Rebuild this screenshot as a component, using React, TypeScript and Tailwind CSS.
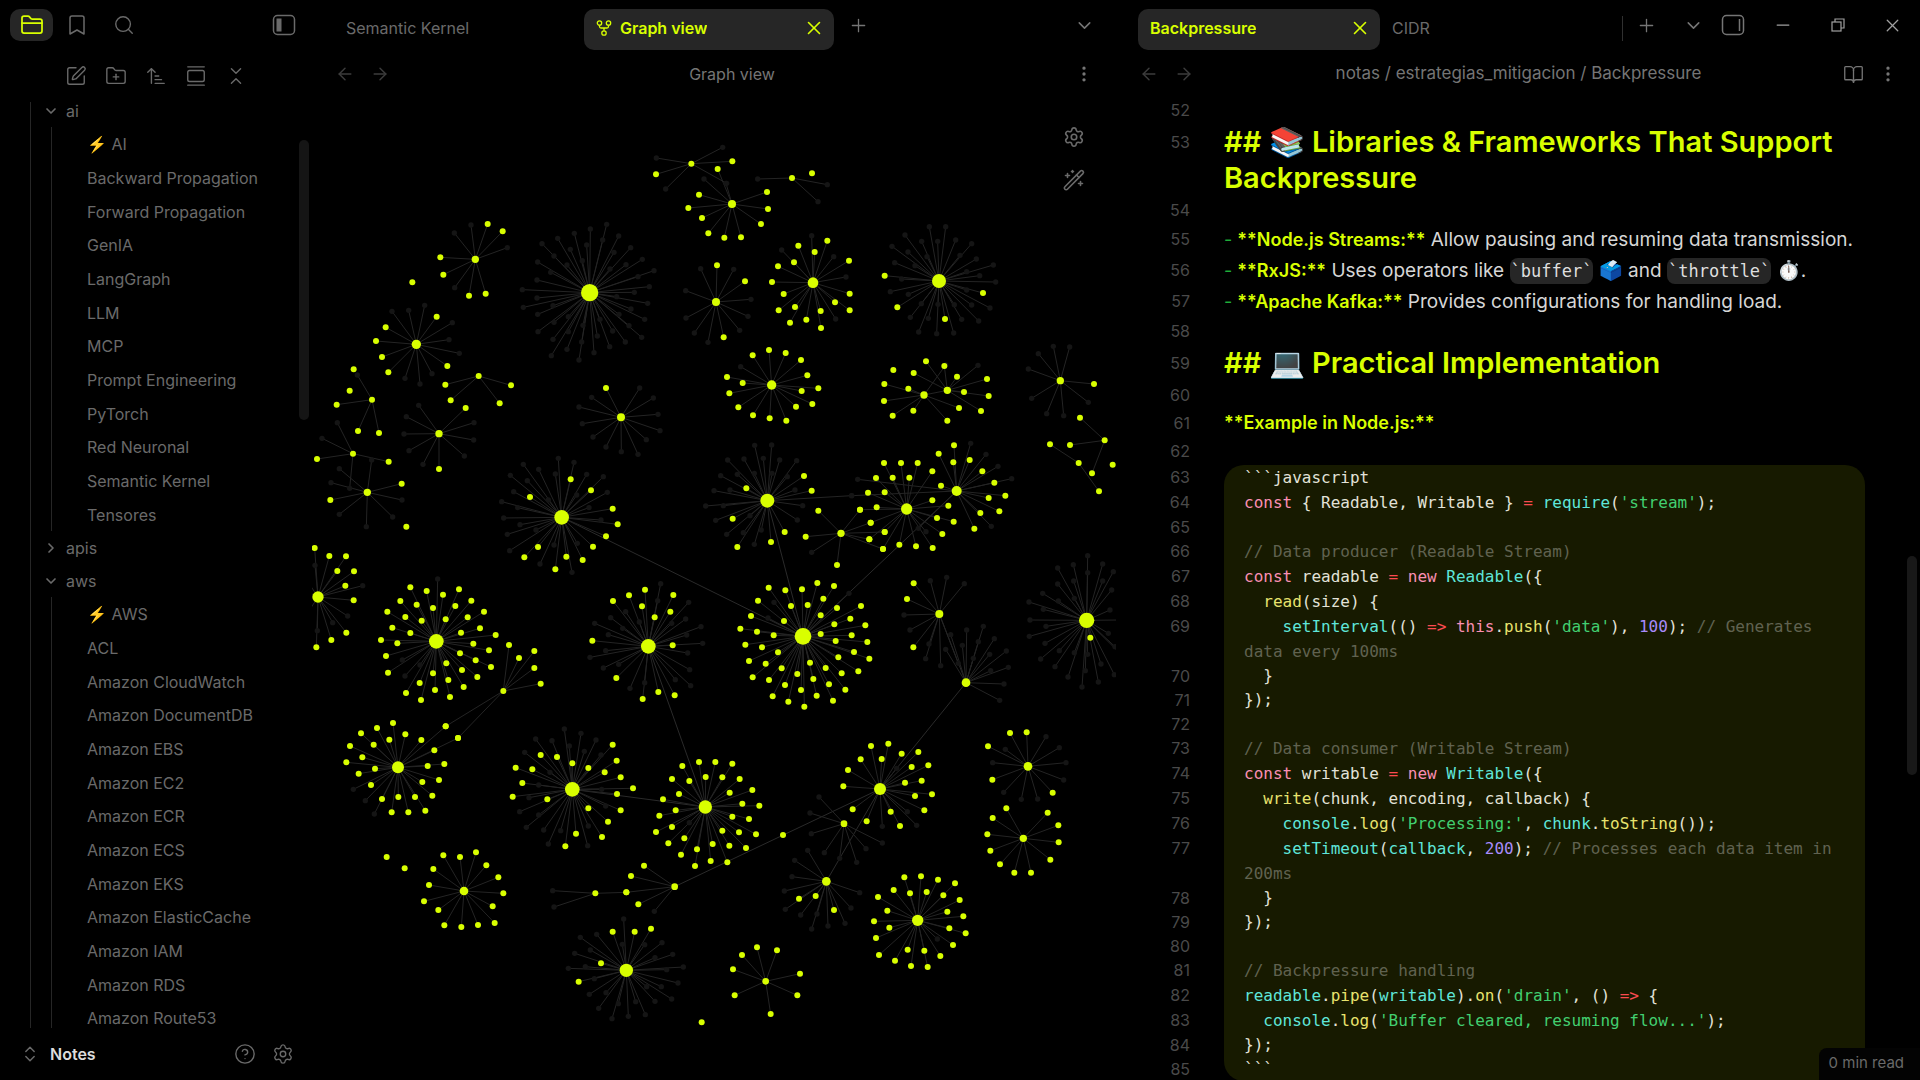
import React, { type ReactNode } from "react";
import {
  ArrowLeft,
  ArrowRight,
  ArrowUpNarrowWide,
  BookOpen,
  Bookmark,
  ChevronDown,
  ChevronRight,
  ChevronsDownUp,
  ChevronsUpDown,
  CircleHelp,
  EllipsisVertical,
  FolderClosed,
  FolderPlus,
  GalleryVertical,
  Minus,
  Plus,
  Search,
  Settings,
  SquarePen,
  X,
} from "lucide-react";

/* ---------- graph data (units of a third of a pixel) ---------- */

type Cluster = { hub: [number, number, number]; notes?: string; ghosts?: string };
type Region = { dx: number; dy: number; clusters: Cluster[]; loose: string };

const regions: Region[] = [
  {
    dx: 0,
    dy: 0,
    loose: "337,457 161,718 149,782 319,1190",
    clusters: [
      { hub: [526, 388, 11], notes: "563,282 608,304 421,382 430,434 507,497 557,491", ghosts: "463,309 513,285 622,353 464,473" },
      { hub: [349, 643, 14], notes: "410,560 257,592 228,633 246,681 265,727 442,708", ghosts: "276,544 326,541 374,526 457,578 447,629 478,670 396,731 360,762 315,745" },
      {
        hub: [869, 488, 26],
        ghosts:
          "726,341 773,325 823,310 871,297 920,283 956,318 992,353 1027,388 1062,422 1048,470 1043,520 1034,568 1025,622 976,636 929,650 882,668 837,690 801,658 754,677 759,628 714,605 713,553 670,532 711,504 667,479 711,450 713,396 752,427 762,378 811,358 860,345 908,330 942,367 930,417 978,404 1014,440 1003,487 993,537 987,587 938,603 892,618 849,586 805,605 845,636 762,577 759,527 801,405 847,392 805,560 900,568 957,553 950,500",
      },
      { hub: [536, 738, 9], notes: "436,764 452,811 633,766 599,820" },
      { hub: [216, 809, 9], notes: "110,824 174,903 237,909", ghosts: "172,735" },
      { hub: [417, 911, 11], notes: "497,834 417,1017", ghosts: "356,826 319,860 312,912 327,962 369,1003 493,978 521,930 522,878" },
      { hub: [159, 971, 9], notes: "51,987 266,995", ghosts: "112,878 66,925 149,1075" },
      { hub: [202, 1087, 11], notes: "305,1061 91,1110", ghosts: "215,990 118,1016 93,1058 306,1110 118,1153 199,1190 278,1161" },
      { hub: [963, 862, 12], notes: "918,774", ghosts: "1019,774 875,802 837,831 1060,804 1074,853 847,881 879,921 1080,902 1039,929 918,951 964,965 1014,973" },
      {
        hub: [785, 1162, 22],
        notes: "812,1048 873,1081 690,1101 938,1136 953,1183 918,1219 879,1250 848,1290 799,1280 714,1251 673,1282 766,1318",
        ghosts:
          "775,985 822,997 670,1003 716,1018 860,1033 910,1040 631,1036 682,1052 766,1032 641,1085 922,1087 605,1115 653,1133 611,1164 660,1184 903,1170 867,1133 622,1213 708,1200 629,1262 762,1245 832,1240 720,1302 816,1327 830,1095 745,1110",
      },
      { hub: [1174, 101, 9], notes: "1068,133 1297,94", ghosts: "1069,84 1097,177 1268,52 1280,160" },
    ],
  },
  {
    dx: 1200,
    dy: 0,
    loose: "336,130 1238,1004 580,720",
    clusters: [
      { hub: [96, 222, 12], notes: "53,117 201,186 204,237 183,282 123,322 73,323 25,310 6,264 -35,234 -3,194", ghosts: "12,147 78,160" },
      { hub: [276, 144, 9], ghosts: "173,147 382,164 354,215" },
      {
        hub: [339, 458, 16],
        notes: "382,332 295,347 344,366 282,397 234,409 216,456 447,392 251,492 236,541 285,531 270,578 319,569 362,543 363,594 405,517 449,491 449,541",
        ghosts: "335,317 245,360 401,380 438,441 407,567",
      },
      { hub: [48, 516, 12], notes: "51,406 135,454 71,622", ghosts: "101,418 153,508 144,559 119,601 24,637 2,416 -43,482 -42,564 -17,609" },
      {
        hub: [717, 453, 21],
        notes: "554,437 592,532 735,567 849,489",
        ghosts:
          "688,290 737,290 615,315 665,334 713,334 767,330 815,341 576,349 624,366 681,380 780,376 829,387 584,398 645,407 880,405 800,425 839,437 605,447 887,456 571,485 625,493 800,480 870,534 815,525 664,521 714,523 763,524 631,562 685,565 785,568 836,573 656,606 710,611 761,609",
      },
      {
        hub: [215, 765, 14],
        notes: "158,676 207,660 257,669 303,690 322,736 355,775 305,783 337,822 288,830 259,872 209,865 159,856 115,832 88,790 81,741 128,759",
        ghosts: "122,710",
      },
      { hub: [672, 795, 11], notes: "553,762 625,776 552,813 578,857 640,842 742,872 777,834 742,781", ghosts: "737,705" },
      { hub: [742, 781, 11], notes: "641,729 678,694 733,708 771,740 861,747 792,786 866,798 843,843", ghosts: "834,706" },
      { hub: [1081, 752, 11], notes: "1182,762", ghosts: "1060,649 1109,651 1015,671 985,717 1165,817 995,805 1040,851 1091,857" },
      { hub: [1214, 931, 9], notes: "1140,863 1110,945 1176,1030" },
      { hub: [1136, 999, 9], notes: "1050,943 1197,1084" },
      {
        hub: [202, 1112, 21],
        notes: "312,1038 335,1082 139,1075 98,1166 254,1206 213,1236 112,1251",
        ghosts:
          "164,946 215,945 83,990 132,987 190,985 239,990 290,992 62,1037 112,1033 163,1030 216,1030 262,1040 42,1082 90,1080 285,1080 17,1128 70,1127 308,1127 47,1171 150,1157 292,1170 80,1213 130,1208 184,1200 163,1243 455,1097",
      },
      {
        hub: [620, 1137, 17],
        notes:
          "552,999 603,999 653,999 528,1044 578,1043 628,1043 697,1024 504,1088 554,1087 697,1111 530,1132 480,1139 745,1127 512,1178 711,1164 761,1175 554,1206 508,1228 727,1212 549,1257 598,1244 648,1249 698,1254",
        ghosts: "678,1205",
      },
      {
        hub: [770, 1083, 15],
        notes: "762,946 716,971 760,997 809,990 847,1024 883,1058 723,1067 866,1104 916,1097 898,1144 841,1149 823,1196",
        ghosts: "812,940 858,973 894,1009 935,1046 874,1189 473,1048 455,1097 655,1195",
      },
      { hub: [423, 1210, 11], notes: "355,1142 317,1220 480,1139 411,1305 512,1178 554,1206 508,1228 549,1257", ghosts: "335,1267" },
    ],
  },
  {
    dx: 0,
    dy: 1230,
    loose: "260,951 314,985 1205,1447",
    clusters: [
      { hub: [54, 171, 17], notes: "44,24 88,48 138,49 112,93 162,94 136,137 161,181 139,278 94,300 49,322", ghosts: "45,76 188,137 143,228 98,248 52,272 -20,60 -30,130 -30,300" },
      {
        hub: [409, 304, 22],
        notes:
          "331,142 380,153 429,164 477,148 301,183 350,194 399,204 466,198 514,182 262,215 316,231 365,242 437,238 503,232 552,215 277,263 331,279 483,278 540,265 587,285 243,300 292,310 520,311 567,331 258,348 480,340 527,361 573,381 264,398 439,370 486,390 532,411 399,400 359,429 445,420 491,441 405,450 318,459 363,480 450,471",
        ghosts: "413,117 307,360 315,408 360,375",
      },
      { hub: [610, 453, 9], notes: "627,315 657,354 703,333 703,384 722,431 437,559 474,594" },
      {
        hub: [294, 682, 18],
        notes:
          "279,549 231,564 183,580 316,583 364,600 268,599 221,614 403,631 150,618 187,652 139,667 225,686 176,701 383,678 433,672 213,735 367,726 417,720 246,777 295,771 345,771 397,767 275,817 325,817 376,812 437,559 474,594",
        ghosts: "160,748 196,782 223,822",
      },
      {
        hub: [817, 748, 22],
        notes:
          "722,645 771,651 817,670 865,684 914,697 938,614 950,662 962,712 999,745 951,762 962,811 865,805 924,845 906,891 828,881 796,919 742,778 638,770 667,729 647,683 697,688",
        ghosts:
          "793,567 843,580 707,597 756,602 888,600 808,618 853,634 674,637 903,645 750,697 716,735 687,773 659,815 716,825 679,862 731,870 782,872 865,858 917,798 905,748 745,912 863,917",
      },
      {
        hub: [1216, 801, 20],
        notes:
          "1197,666 1147,678 1116,717 1168,723 1217,711 1137,762 1089,778 1127,811 1078,827 1116,861 1068,876 1153,895 1105,910 1191,928 1143,944 1185,978 1246,666 1297,671 1267,712 1319,717 1357,750 1289,758 1327,791 1378,797 1297,830 1347,837 1267,872 1317,877 1368,883 1238,912 1288,917 1338,924 1232,963 1282,967",
        ghosts: "1168,848",
      },
      {
        hub: [1045, 319, 22],
        notes: "939,183 987,166 1035,149 1026,199 1064,232 1120,165 1111,215 877,302 1118,316 949,414 1028,477 1075,456 1124,466",
        ghosts:
          "1082,131 1166,187 1073,182 1157,237 977,215 932,233 884,250 1018,246 968,265 925,284 1203,260 1160,285 1208,310 1163,339 917,332 870,352 910,384 956,373 990,445 1034,428 1169,389 1126,419 1172,437 1115,250",
      },
      { hub: [492, 1053, 13], notes: "430,946 480,951 528,937 400,987 559,976 595,1012 387,1035 610,1060 372,1084 578,1099 415,1110 433,1156 484,1161 534,1155 584,1149" },
      { hub: [886, 1060, 9], notes: "979,1057", ghosts: "758,1052 762,1101" },
      { hub: [1124, 1040, 10], notes: "1032,977 993,1008 979,1057 1015,1093", ghosts: "1063,1114" },
      {
        hub: [979, 1291, 20],
        notes: "938,1175 1004,1175 1053,1166 903,1270 836,1325",
        ghosts:
          "971,1137 841,1192 890,1183 1086,1208 1118,1243 824,1240 871,1230 805,1285 856,1280 1150,1281 1100,1289 1134,1329 883,1316 868,1363 1084,1340 1115,1377 918,1358 896,1405 955,1391 1007,1385 1065,1384 936,1436 985,1429 1036,1424 967,1213 1034,1214 1065,1253 1040,1340",
      },
    ],
  },
  {
    dx: 1200,
    dy: 1230,
    loose: "249,885",
    clusters: [
      {
        hub: [309, 289, 25],
        notes:
          "206,143 256,151 306,148 352,129 402,138 174,182 273,198 323,195 370,176 411,204 483,198 153,228 252,243 362,226 451,236 403,253 496,256 121,266 171,275 221,286 362,282 407,303 455,286 502,306 136,314 186,322 234,337 462,336 508,356 415,352 147,363 197,371 245,385 330,368 377,384 425,400 475,394 158,412 207,420 255,435 292,402 340,417 387,433 436,449 218,469 265,485 303,450 350,467 399,482 313,500",
        ghosts: "222,187 204,234 447,160",
      },
      { hub: [718, 222, 12], notes: "641,130 621,177 640,322", ghosts: "691,122 740,112 793,131 612,225 630,270 687,312 677,356 722,377 775,370" },
      { hub: [798, 428, 13], ghosts: "752,284 787,316 800,270 850,259 883,296 835,305 737,328 869,343 820,355 919,333 925,382 872,392 912,432 899,481" },
      {
        hub: [1160, 241, 23],
        notes: "1171,293",
        ghosts:
          "1163,47 1208,72 1120,74 1073,84 1163,98 1121,123 1208,123 1073,132 1028,160 1075,183 987,186 1030,208 1123,175 990,240 1038,259 988,289 1035,310 1078,332 1022,357 1123,338 1065,380 1163,343 1104,411 1156,392 1146,441 1203,372 1195,426 1243,404 1245,320 1240,95 1235,150 1230,210 1225,280 1260,240 1260,340",
      },
      {
        hub: [540, 747, 18],
        notes:
          "513,618 565,611 605,641 655,636 545,657 482,658 635,681 685,676 444,690 615,728 665,722 430,739 645,768 696,763 458,808 572,815 673,811 500,844 600,858",
        ghosts: "590,685 547,859 622,815 650,856",
      },
      { hub: [984, 679, 13], notes: "930,579 980,577 864,619 877,719 1058,758", ghosts: "1038,590 1078,623 916,628 878,668 1098,668 1091,720 911,757 964,778 1013,777" },
      { hub: [970, 895, 11], notes: "919,805 1043,818 878,834 1075,856 862,883 1076,907 871,932 900,973 943,998 993,998 1051,959" },
      { hub: [432, 851, 10], ghosts: "357,771 330,819 334,881 373,938 419,955 498,926 470,967 547,909" },
      { hub: [379, 1024, 13], notes: "297,1076 347,1068 402,1110", ghosts: "323,931 284,961 276,1010 253,1053 479,1058 256,1108 302,1125 351,1122 453,1104 335,1167 384,1158 435,1150" },
      {
        hub: [653, 1141, 17],
        notes:
          "613,1012 663,1009 714,1019 765,1030 581,1050 630,1060 680,1056 730,1066 779,1080 534,1071 562,1112 742,1115 790,1129 522,1144 568,1163 748,1165 797,1180 528,1194 759,1215 537,1245 623,1229 673,1232 721,1248 585,1262 633,1278 683,1281",
        ghosts: "712,1197",
      },
      { hub: [197, 1324, 10], notes: "171,1222 231,1231 126,1245 99,1288 300,1301 104,1366 292,1366 212,1422" },
    ],
  },
];

const bridges: [number, number, number, number][] = [
  [785, 1162, 1509, 1519],
  [1402, 1112, 1509, 1519],
  [1970, 1083, 1509, 1519],
  [817, 1978, 1216, 2031],
  [1045, 1549, 1216, 2031],
  [1124, 2270, 1740, 1977],
  [1998, 1658, 1740, 1977],
  [1740, 1977, 1579, 2254],
  [1918, 1452, 1998, 1658],
];

const points = (text = "") =>
  text
    .split(" ")
    .filter(Boolean)
    .map((pair) => pair.split(",").map(Number) as [number, number]);

function Graph() {
  return (
    <svg viewBox="36 -90 2412 2940" preserveAspectRatio="xMidYMin meet" className="size-full" role="img" aria-label="Graph of linked notes">
      <g stroke="#2a2a2a" strokeWidth="3">
        {bridges.map(([x1, y1, x2, y2], i) => (
          <line key={i} x1={x1} y1={y1} x2={x2} y2={y2} />
        ))}
      </g>
      {regions.map((region, r) => (
        <g key={r} transform={`translate(${region.dx} ${region.dy})`}>
          {region.clusters.map(({ hub: [hx, hy], notes, ghosts }, c) => (
            <g key={c} stroke="#242424" strokeWidth="3">
              {[...points(notes), ...points(ghosts)].map(([x, y], i) => (
                <line key={i} x1={hx} y1={hy} x2={x} y2={y} />
              ))}
            </g>
          ))}
          {region.clusters.map(({ ghosts }, c) => (
            <g key={c} fill="#151515">
              {points(ghosts).map(([x, y], i) => (
                <circle key={i} cx={x} cy={y} r="8" />
              ))}
            </g>
          ))}
        </g>
      ))}
      {regions.map((region, r) => (
        <g key={r} transform={`translate(${region.dx} ${region.dy})`} fill="#d9ff00">
          {region.clusters.map(({ hub: [hx, hy, radius], notes }, c) => (
            <g key={c}>
              <circle cx={hx} cy={hy} r={radius} />
              {points(notes).map(([x, y], i) => (
                <circle key={i} cx={x} cy={y} r="9" />
              ))}
            </g>
          ))}
          {points(region.loose).map(([x, y], i) => (
            <circle key={i} cx={x} cy={y} r="9" />
          ))}
        </g>
      ))}
    </svg>
  );
}

/* ---------- small icons ---------- */

function PanelIcon({ side }: { side: "left" | "right" }) {
  return (
    <svg viewBox="0 0 24 24" width="24" height="24" fill="none" stroke="currentColor" strokeWidth="1.5" className="shrink-0">
      <rect x="1.5" y="2.500" width="21" height="19" rx="4" />
      {side === "left" ? <rect x="5" y="6" width="4" height="12" fill="currentColor" strokeWidth="1" /> : <path d="M18.500 6v12" />}
    </svg>
  );
}

function GraphIcon() {
  return (
    <svg viewBox="0 0 16 16" width="16" height="16" fill="none" stroke="currentColor" strokeWidth="1.3" className="shrink-0">
      <circle cx="3.5" cy="3" r="2.2" />
      <circle cx="12.5" cy="3" r="2.2" />
      <circle cx="8" cy="13" r="2.2" />
      <path d="M3.500 5.200v1.300q0 1.500 1.500 1.500h6q1.500 0 1.500-1.500V5.200M8 8v2.800" />
    </svg>
  );
}

function RestoreIcon() {
  return (
    <svg viewBox="0 0 14 14" width="14" height="14" fill="none" stroke="currentColor" strokeWidth="1.2">
      <rect x="1" y="4" width="9" height="9" />
      <path d="M4 4V1h9v9h-3" />
    </svg>
  );
}

function WandIcon() {
  return (
    <svg viewBox="0 0 24 24" width="24" height="24" fill="none" stroke="currentColor" strokeWidth="1.6" strokeLinecap="round" strokeLinejoin="round">
      <path d="M18.400 3.100a1.700 1.700 0 0 1 2.500 2.500L5.400 21.300a1.700 1.700 0 0 1-2.500-2.500z" />
      <path d="m14.500 7 2.500 2.500" />
      <path d="M5.500 5.500v4M3.500 7.500h4M10.500 2.500v2M9.500 3.500h2M18.500 13.500v4M16.500 15.500h4" />
    </svg>
  );
}

function IconButton({ label, className = "", children }: { label: string; className?: string; children: ReactNode }) {
  return (
    <button type="button" aria-label={label} className={`flex shrink-0 items-center justify-center ${className}`}>
      {children}
    </button>
  );
}

/* ---------- sidebar ---------- */

const aiNotes = ["⚡ AI", "Backward Propagation", "Forward Propagation", "GenIA", "LangGraph", "LLM", "MCP", "Prompt Engineering", "PyTorch", "Red Neuronal", "Semantic Kernel", "Tensores"];
const awsNotes = ["⚡ AWS", "ACL", "Amazon CloudWatch", "Amazon DocumentDB", "Amazon EBS", "Amazon EC2", "Amazon ECR", "Amazon ECS", "Amazon EKS", "Amazon ElasticCache", "Amazon IAM", "Amazon RDS", "Amazon Route53"];

function Folder({ name, notes }: { name: string; notes?: string[] }) {
  return (
    <li>
      <button type="button" aria-expanded={Boolean(notes)} className="flex h-[33px] items-center gap-[7px] pl-3">
        {notes ? <ChevronDown size={16} strokeWidth={2.5} /> : <ChevronRight size={16} strokeWidth={2.5} />}
        {name}
      </button>
      {notes && (
        <ul className="ml-5 border-l border-[#262626]">
          {notes.map((note) => (
            <li key={note} className="flex h-[34px] items-center pl-[35px] [&:nth-child(3n)]:h-[33px]">
              <a href="#note" className="leading-5 whitespace-nowrap">
                {note}
              </a>
            </li>
          ))}
        </ul>
      )}
    </li>
  );
}

function Sidebar() {
  return (
    <aside className="flex w-[312px] shrink-0 flex-col text-[#6a6a6a]">
      <div className="flex h-[50px] shrink-0 items-center pr-4 pl-[10px]">
        <IconButton label="Files" className="h-8 w-[43px] rounded-[10px] bg-[#262626] text-[#d9ff00]">
          <FolderClosed size={24} strokeWidth={1.75} />
        </IconButton>
        <IconButton label="Bookmarks" className="ml-3 w-6">
          <Bookmark size={24} strokeWidth={1.5} />
        </IconButton>
        <IconButton label="Search" className="ml-[23px] w-6">
          <Search size={22} strokeWidth={1.5} />
        </IconButton>
        <IconButton label="Toggle sidebar" className="ml-auto w-6">
          <PanelIcon side="left" />
        </IconButton>
      </div>
      <div className="flex h-[52px] shrink-0 items-center justify-center">
        {[SquarePen, FolderPlus, ArrowUpNarrowWide, GalleryVertical, ChevronsDownUp].map((Icon, i) => (
          <IconButton key={i} label={["New note", "New folder", "Sort", "Auto-reveal", "Collapse all"][i]} className="h-8 w-10">
            <Icon size={22} strokeWidth={1.5} />
          </IconButton>
        ))}
      </div>
      <div className="relative min-h-0 flex-1 overflow-hidden">
        <ul className="-mt-2 ml-[30px] border-l border-[#262626] text-base">
          <Folder name="ai" notes={aiNotes} />
          <Folder name="apis" />
          <Folder name="aws" notes={awsNotes} />
        </ul>
        <div className="absolute top-[38px] right-[3px] h-[280px] w-[10px] rounded-full bg-[#151515]" />
      </div>
      <div className="flex h-[52px] shrink-0 items-center pr-[17px] pl-5">
        <button type="button" className="flex items-center gap-[10px] text-base font-semibold text-[#dcdcdc]">
          <ChevronsUpDown size={20} strokeWidth={1.75} className="text-[#6a6a6a]" />
          Notes
        </button>
        <IconButton label="Help" className="ml-auto w-6">
          <CircleHelp size={22} strokeWidth={1.5} />
        </IconButton>
        <IconButton label="Settings" className="ml-[14px] w-6">
          <Settings size={22} strokeWidth={1.5} />
        </IconButton>
      </div>
    </aside>
  );
}

/* ---------- pane chrome ---------- */

function Tab({ title, icon, active }: { title: string; icon?: ReactNode; active?: boolean }) {
  return (
    <div
      className={`flex h-[41px] max-w-[250px] flex-1 items-center gap-2 rounded-[10px] px-3 pb-[3px] text-base ${active ? "bg-[#262626] font-semibold text-[#d9ff00]" : "text-[#6a6a6a]"}`}
    >
      {icon}
      <a href="#tab" className="truncate">
        {title}
      </a>
      {active && (
        <IconButton label="Close tab" className="-mr-1 ml-auto w-6">
          <X size={22} strokeWidth={1.75} />
        </IconButton>
      )}
    </div>
  );
}

function ViewHeader({ children, action }: { children: ReactNode; action?: ReactNode }) {
  return (
    <div className="flex h-12 shrink-0 items-center pr-5 pl-[21px] text-[#757575]">
      <IconButton label="Back" className="w-6 text-[#3c3c3c]">
        <ArrowLeft size={20} strokeWidth={1.75} />
      </IconButton>
      <IconButton label="Forward" className="ml-[11px] w-6 text-[#3c3c3c]">
        <ArrowRight size={20} strokeWidth={1.75} />
      </IconButton>
      <div className="min-w-0 flex-1 truncate text-center text-base">{children}</div>
      {action}
      <IconButton label="More options" className="w-6">
        <EllipsisVertical size={20} strokeWidth={2} />
      </IconButton>
    </div>
  );
}

function GraphPane() {
  return (
    <section className="flex min-w-0 flex-1 flex-col">
      <div className="flex h-[50px] shrink-0 items-center pt-[9px] pr-5 pl-[22px] text-[#757575]">
        <Tab title="Semantic Kernel" />
        <Tab title="Graph view" icon={<GraphIcon />} active />
        <IconButton label="New tab" className="mb-[8px] ml-1 w-10 self-center">
          <Plus size={21} strokeWidth={1.5} />
        </IconButton>
        <IconButton label="Tab list" className="mb-[8px] ml-auto w-6">
          <ChevronDown size={21} strokeWidth={1.75} />
        </IconButton>
      </div>
      <ViewHeader>Graph view</ViewHeader>
      <div className="relative min-h-0 flex-1 pt-0.5">
        <Graph />
        <div className="absolute top-[27px] right-[30px] flex flex-col gap-[19px] text-[#6a6a6a]">
          <IconButton label="Graph settings" className="size-6">
            <Settings size={22} strokeWidth={1.75} />
          </IconButton>
          <IconButton label="Animate graph" className="size-6">
            <WandIcon />
          </IconButton>
        </div>
      </div>
    </section>
  );
}

/* ---------- editor ---------- */

type Tone = "k" | "t" | "o" | "c" | "s" | "n" | "f" | "m";
type Token = [string, Tone?];

const tones: Record<Tone, string> = {
  k: "text-[#fa8fb4]",
  t: "text-[#e2e2d8]",
  o: "text-[#fa4b50]",
  c: "text-[#5fe6da]",
  s: "text-[#42cf70]",
  n: "text-[#a88bfa]",
  f: "text-[#e8e36e]",
  m: "text-[#606250]",
};

const code: Token[][] = [
  [["```javascript"]],
  [["const", "k"], [" { Readable, Writable } "], ["=", "o"], [" "], ["require", "c"], ["("], ["'stream'", "s"], [");"]],
  [],
  [["// Data producer (Readable Stream)", "m"]],
  [["const", "k"], [" readable "], ["=", "o"], [" "], ["new", "k"], [" "], ["Readable", "c"], ["({"]],
  [["  "], ["read", "f"], ["(size) {"]],
  [["    "], ["setInterval", "c"], ["(() "], ["=>", "o"], [" "], ["this", "k"], ["."], ["push", "f"], ["("], ["'data'", "s"], ["), "], ["100", "n"], ["); "], ["// Generates ", "m"], ["data every 100ms", "m"]],
  [["  }"]],
  [["});"]],
  [],
  [["// Data consumer (Writable Stream)", "m"]],
  [["const", "k"], [" writable "], ["=", "o"], [" "], ["new", "k"], [" "], ["Writable", "c"], ["({"]],
  [["  "], ["write", "f"], ["(chunk, encoding, callback) {"]],
  [["    "], ["console", "c"], ["."], ["log", "f"], ["("], ["'Processing:'", "s"], [", "], ["chunk", "c"], ["."], ["toString", "f"], ["());"]],
  [["    "], ["setTimeout", "c"], ["("], ["callback", "c"], [", "], ["200", "n"], ["); "], ["// Processes each data item in ", "m"], ["200ms", "m"]],
  [["  }"]],
  [["});"]],
  [],
  [["// Backpressure handling", "m"]],
  [["readable", "c"], ["."], ["pipe", "f"], ["("], ["writable", "c"], [")."], ["on", "f"], ["("], ["'drain'", "s"], [", () "], ["=>", "o"], [" {"]],
  [["  "], ["console", "c"], ["."], ["log", "f"], ["("], ["'Buffer cleared, resuming flow...'", "s"], [");"]],
  [["});"]],
  [["```"]],
];

function Line({ no, numClass, children }: { no: number; numClass: string; children?: ReactNode }) {
  return (
    <div className="flex">
      <span className={`w-[74px] shrink-0 text-right text-base text-[#4a4a4a] select-none ${numClass}`}>{no}</span>
      <div className="ml-[34px] min-w-0 flex-1">{children}</div>
    </div>
  );
}

const Strong = ({ children }: { children: ReactNode }) => <strong className="text-[18px] font-semibold text-[#d9ff00]">{children}</strong>;
const Dash = () => <span className="text-[18px] text-[#1fae3a]">- </span>;
const InlineCode = ({ children }: { children: ReactNode }) => (
  <code className="rounded-lg bg-[#262626] px-px py-[3px] font-['DejaVu_Sans_Mono',monospace] text-[17px] text-[#dedede]">{children}</code>
);

function Editor() {
  return (
    <div className="relative min-h-0 flex-1 overflow-hidden pr-[55px] text-[19px] text-[#d6d6d6]">
      <div className="-mt-0.5">
        <Line no={52} numClass="leading-7" />
        <Line no={53} numClass="leading-9">
          <h2 className="text-[29px] leading-9 font-semibold text-[#d9ff00]">## 📚 Libraries &amp; Frameworks That Support Backpressure</h2>
        </Line>
        <Line no={54} numClass="leading-7" />
        <Line no={55} numClass="leading-[31px]">
          <p className="h-[31px] leading-[31px] whitespace-nowrap">
            <Dash />
            <Strong>**Node.js Streams:**</Strong> Allow pausing and resuming data transmission.
          </p>
        </Line>
        <Line no={56} numClass="leading-[31px]">
          <p className="h-[31px] leading-[31px] whitespace-nowrap">
            <Dash />
            <Strong>**RxJS:**</Strong> Uses operators like <InlineCode>`buffer`</InlineCode> 🗳️ and <InlineCode>`throttle`</InlineCode> ⏱️.
          </p>
        </Line>
        <Line no={57} numClass="leading-[31px]">
          <p className="h-[31px] leading-[31px] whitespace-nowrap">
            <Dash />
            <Strong>**Apache Kafka:**</Strong> Provides configurations for handling load.
          </p>
        </Line>
        <Line no={58} numClass="leading-7" />
        <Line no={59} numClass="leading-9">
          <h2 className="text-[29px] leading-9 font-semibold text-[#d9ff00]">## 💻 Practical Implementation</h2>
        </Line>
        <Line no={60} numClass="leading-7" />
        <Line no={61} numClass="leading-7">
          <p className="h-7 leading-7">
            <Strong>**Example in Node.js:**</Strong>
          </p>
        </Line>
        <Line no={62} numClass="leading-7" />
        {code.map((tokens, i) => {
          const short = tokens.length < 2 && tokens[0]?.[1] !== "m" && i > 0;
          const edge = i === 0 ? "rounded-t-[20px]" : i === code.length - 1 ? "rounded-b-[20px]" : "";
          return (
            <Line key={i} no={63 + i} numClass={short ? "leading-6" : "leading-[25px]"}>
              <pre className={`h-full bg-[#171a00] px-5 font-['DejaVu_Sans_Mono',monospace] text-base whitespace-pre-wrap ${short ? "leading-6" : "leading-[25px]"} ${edge}`}>
                {tokens.map(([text, tone = "t"], j) => (
                  <span key={j} className={tones[tone]}>
                    {text}
                  </span>
                ))}
              </pre>
            </Line>
          );
        })}
      </div>
      <div className="absolute top-[458px] right-[3px] h-[219px] w-[10px] rounded-full bg-[#181818]" />
      <div className="absolute right-0 bottom-0 rounded-tl-lg bg-[#030303] px-4 pt-[3px] pb-[5px] pl-[10px] text-[15px] leading-6 text-[#6a6a6a]">0 min read</div>
    </div>
  );
}

function EditorPane() {
  return (
    <section className="flex min-w-0 flex-1 flex-col">
      <div className="flex h-[50px] shrink-0 pl-[22px] text-[#757575]">
        <div className="flex min-w-0 flex-1 pt-[9px]">
          <Tab title="Backpressure" active />
          <Tab title="CIDR" />
        </div>
        <div className="mt-4 h-[25px] w-px bg-[#303030]" />
        <div className="flex">
          <IconButton label="New tab" className="w-[46px]">
            <Plus size={21} strokeWidth={1.5} />
          </IconButton>
          <IconButton label="Tab list" className="w-12">
            <ChevronDown size={21} strokeWidth={1.75} />
          </IconButton>
          <IconButton label="Toggle right panel" className="mr-1.5 w-8">
            <PanelIcon side="right" />
          </IconButton>
          <IconButton label="Minimize" className="w-[55px] text-[#a0a0a0]">
            <Minus size={20} strokeWidth={1.5} />
          </IconButton>
          <IconButton label="Restore" className="w-[55px] text-[#a0a0a0]">
            <RestoreIcon />
          </IconButton>
          <IconButton label="Close" className="w-[55px] text-[#a0a0a0]">
            <X size={21} strokeWidth={1.5} />
          </IconButton>
        </div>
      </div>
      <ViewHeader
        action={
          <IconButton label="Reading view" className="mr-[11px] w-6">
            <BookOpen size={21} strokeWidth={1.5} />
          </IconButton>
        }
      >
        <span className="text-[17px]">notas / estrategias_mitigacion / Backpressure</span>
      </ViewHeader>
      <Editor />
    </section>
  );
}

export default function App() {
  return (
    <main className="flex h-screen overflow-hidden bg-black font-['Inter',sans-serif]">
      <Sidebar />
      <GraphPane />
      <EditorPane />
    </main>
  );
}
